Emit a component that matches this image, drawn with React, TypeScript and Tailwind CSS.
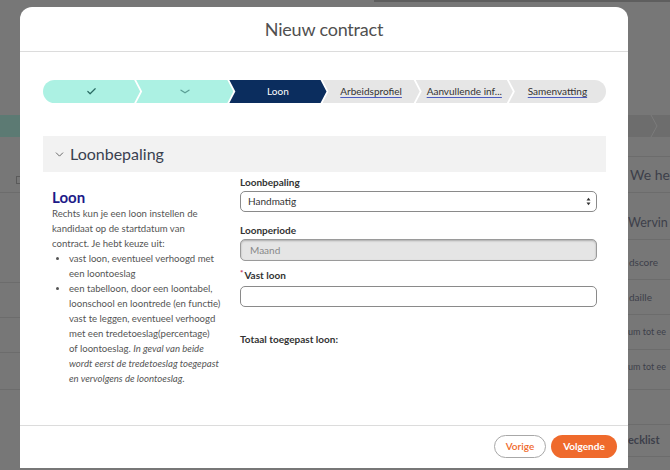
import { Check, ChevronDown } from 'lucide-react';

type Step = { label: string; shape: string; tone: string; kind: 'check' | 'flat' | 'active' | 'link' };

const steps: Step[] = [
  {
    label: '',
    kind: 'check',
    shape: 'rounded-l-full [clip-path:polygon(0_0,calc(100%_-_6px)_0,100%_50%,calc(100%_-_6px)_100%,0_100%)]',
    tone: 'bg-[#acf1e3] text-[#2b6c64]',
  },
  {
    label: '',
    kind: 'flat',
    shape: '-ml-[4px] [clip-path:polygon(0_0,calc(100%_-_6px)_0,100%_50%,calc(100%_-_6px)_100%,0_100%,6px_50%)]',
    tone: 'bg-[#acf1e3] text-[#5c9f96]',
  },
  {
    label: 'Loon',
    kind: 'active',
    shape: '-ml-[4px] [clip-path:polygon(0_0,calc(100%_-_6px)_0,100%_50%,calc(100%_-_6px)_100%,0_100%,6px_50%)]',
    tone: 'bg-[#0b2d5e] text-white',
  },
  {
    label: 'Arbeidsprofiel',
    kind: 'link',
    shape: '-ml-[4px] [clip-path:polygon(0_0,calc(100%_-_6px)_0,100%_50%,calc(100%_-_6px)_100%,0_100%,6px_50%)]',
    tone: 'bg-[#e6e6e6] text-[#333]',
  },
  {
    label: 'Aanvullende inf...',
    kind: 'link',
    shape: '-ml-[4px] [clip-path:polygon(0_0,calc(100%_-_6px)_0,100%_50%,calc(100%_-_6px)_100%,0_100%,6px_50%)]',
    tone: 'bg-[#e6e6e6] text-[#333]',
  },
  {
    label: 'Samenvatting',
    kind: 'link',
    shape: '-ml-[4px] rounded-r-full [clip-path:polygon(0_0,100%_0,100%_100%,0_100%,6px_50%)]',
    tone: 'bg-[#e6e6e6] text-[#333]',
  },
];

function Stepper() {
  return (
    <div className="flex h-[23px]">
      {steps.map((s, i) => (
        <div key={i} className={`flex-1 flex items-center justify-center text-[10px] ${s.shape} ${s.tone}`}>
          {s.kind === 'check' && <Check className="w-[11px] h-[11px]" strokeWidth={2.6} />}
          {s.kind === 'flat' && (
            <svg width="10" height="5" viewBox="0 0 10 5" fill="none">
              <path d="M1 1.2 L5 3.8 L9 1.2" stroke="currentColor" strokeWidth="1.3" strokeLinecap="round" />
            </svg>
          )}
          {s.kind === 'active' && <span>{s.label}</span>}
          {s.kind === 'link' && (
            <span className="underline decoration-[#4b5cc0] underline-offset-[2px] whitespace-nowrap">{s.label}</span>
          )}
        </div>
      ))}
    </div>
  );
}

// rows of the dimmed page to the right of the dialog (only their visible ends)
const rightRows = [
  { h: 'h-[20px]', text: '', cls: '' },
  { h: 'h-[36px]', text: 'We he', cls: 'text-[14px] pl-[2px] items-center' },
  { h: 'h-[47px]', text: 'Wervin', cls: 'text-[12.5px] items-end pb-[6px]' },
  { h: 'h-[40px]', text: 'dscore', cls: 'text-[10px] items-center pt-[6px] pl-[1px]' },
  { h: 'h-[35px]', text: 'daille', cls: 'text-[10px] items-center pl-[1px]' },
  { h: 'h-[35px]', text: 'um tot ee', cls: 'text-[9px] items-center' },
  { h: 'h-[40px]', text: 'um tot ee', cls: 'text-[9px] items-center pb-[6px]' },
  { h: 'h-[35px]', text: '', cls: '' },
  { h: 'h-[32px]', text: 'ecklist', cls: 'text-[11px] font-bold items-center' },
];

function BackdropPage() {
  return (
    <div className="flex flex-col w-full h-full">
      <div className="flex h-[2px]">
        <div className="w-[374px]" />
        <div className="flex-1 bg-[#5e5e5e]" />
      </div>
      <div className="h-[113px]" />
      {/* dimmed progress bar of the page */}
      <div className="flex h-[22px]">
        <div className="w-[600px] bg-[#5c7a73]" />
        <div className="flex-1 bg-[#6d6d6d] flex items-center pl-[50px]">
          <svg width="8" height="22" viewBox="0 0 8 22" fill="none">
            <path d="M1 0 L7 11 L1 22" stroke="#7c7c7c" strokeWidth="1" />
          </svg>
        </div>
      </div>
      <div className="flex flex-1">
        <div className="w-[20px] flex flex-col">
          <div className="h-[56px] border-b border-[#6c6c6c] flex items-end justify-end pb-[8px]">
            <div className="w-[4px] h-[8px] border border-[#5a5a5a] border-r-0" />
          </div>
          <div className="h-[90px] border-b border-[#6c6c6c]" />
          <div className="h-[35px] border-b border-[#6c6c6c]" />
          <div className="h-[35px] border-b border-[#6c6c6c]" />
          <div className="h-[37px] border-b border-[#6c6c6c]" />
        </div>
        <div className="flex-1" />
        <div className="w-[42px] flex flex-col text-[#3d3f4a]">
          {rightRows.map((r, i) => (
            <div key={i} className={`${r.h} flex shrink-0 border-b border-[#6c6c6c] whitespace-nowrap ${r.cls}`}>
              {r.text}
            </div>
          ))}
        </div>
      </div>
    </div>
  );
}

export default function App() {
  return (
    <div className="relative w-[670px] h-[470px] overflow-hidden bg-[#777777] font-['Lato',sans-serif]">
      <BackdropPage />

      {/* dialog */}
      <div className="absolute left-[20px] top-[7px] w-[608px] h-[461px] bg-white rounded-t-[12px] flex flex-col">
        <div className="h-[45px] flex items-center justify-center border-b border-[#dcdcdc] shrink-0">
          <h1 className="text-[18px] text-[#505050] tracking-[-0.2px]">Nieuw contract</h1>
        </div>

        <div className="flex-1 flex flex-col pl-[23px] pr-[22px] pt-[28px]">
          <Stepper />

          <div className="mt-[33px] h-[36px] bg-[#f2f2f2] flex items-center pl-[10px] gap-[4px] text-[#3a4150]">
            <ChevronDown className="w-[13px] h-[13px] text-[#555]" strokeWidth={1.6} />
            <span className="text-[16px]">Loonbepaling</span>
          </div>

          <div className="flex px-[9px]">
            <div className="w-[188px] shrink-0 pt-[16px]">
              <h2 className="text-[15px] leading-[18px] font-bold text-[#1d1a88]">Loon</h2>
              <div className="text-[9.6px] leading-[15px] text-[#555] whitespace-nowrap">
                <p>
                  Rechts kun je een loon instellen de
                  <br />
                  kandidaat op de startdatum van
                  <br />
                  contract. Je hebt keuze uit:
                </p>
                <ul className="pl-[17px] list-disc marker:text-[#555]">
                  <li>
                    vast loon, eventueel verhoogd met
                    <br />
                    een loontoeslag
                  </li>
                  <li>
                    een tabelloon, door een loontabel,
                    <br />
                    loonschool en loontrede (en functie)
                    <br />
                    vast te leggen, eventueel verhoogd
                    <br />
                    met een tredetoeslag(percentage)
                    <br />
                    of loontoeslag. <i>In geval van beide</i>
                    <br />
                    <i>wordt eerst de tredetoeslag toegepast</i>
                    <br />
                    <i>en vervolgens de loontoeslag.</i>
                  </li>
                </ul>
              </div>
            </div>

            <div className="flex-1 flex flex-col pt-[3px] text-[10px] text-[#333]">
              <label className="h-[14px] leading-[14px] font-bold">Loonbepaling</label>
              <div className="mt-[2px] h-[21px] rounded-[5px] border border-[#8a8a8a] flex items-center justify-between pl-[7px] pr-[5px]">
                <span>Handmatig</span>
                <svg width="5" height="9" viewBox="0 0 5 9" fill="#333">
                  <path d="M0.5 3.5 L2.5 0.8 L4.5 3.5 Z" />
                  <path d="M0.5 5.5 L2.5 8.2 L4.5 5.5 Z" />
                </svg>
              </div>

              <label className="mt-[11px] h-[14px] leading-[14px] font-bold">Loonperiode</label>
              <div className="mt-[2px] h-[22px] rounded-[5px] border border-[#9a9a9a] bg-[#e5e5e5] shadow-[inset_0_1px_2px_rgba(0,0,0,0.25)] flex items-center pl-[9px] text-[#888]">
                Maand
              </div>

              <label className="mt-[7px] h-[14px] leading-[14px] font-bold flex items-start">
                <span className="text-[#c2315b] text-[8px] leading-[10px] mr-[1px]">*</span>
                Vast loon
              </label>
              <div className="mt-[4px] h-[21px] rounded-[5px] border border-[#8a8a8a] bg-white" />

              <div className="mt-[25px] h-[14px] leading-[14px] font-bold">Totaal toegepast loon:</div>
            </div>
          </div>
        </div>

        <div className="h-[43px] shrink-0 border-t border-[#dcdcdc] flex items-start justify-end gap-[5px] pt-[9px] pr-[11px]">
          <button className="w-[52px] h-[23px] rounded-full border border-[#a8a8a8] text-[#ef6a2c] text-[10px] font-semibold">
            Vorige
          </button>
          <button className="w-[66px] h-[23px] rounded-full bg-[#ef6a2c] text-white text-[10px] font-bold">
            Volgende
          </button>
        </div>
      </div>
    </div>
  );
}
